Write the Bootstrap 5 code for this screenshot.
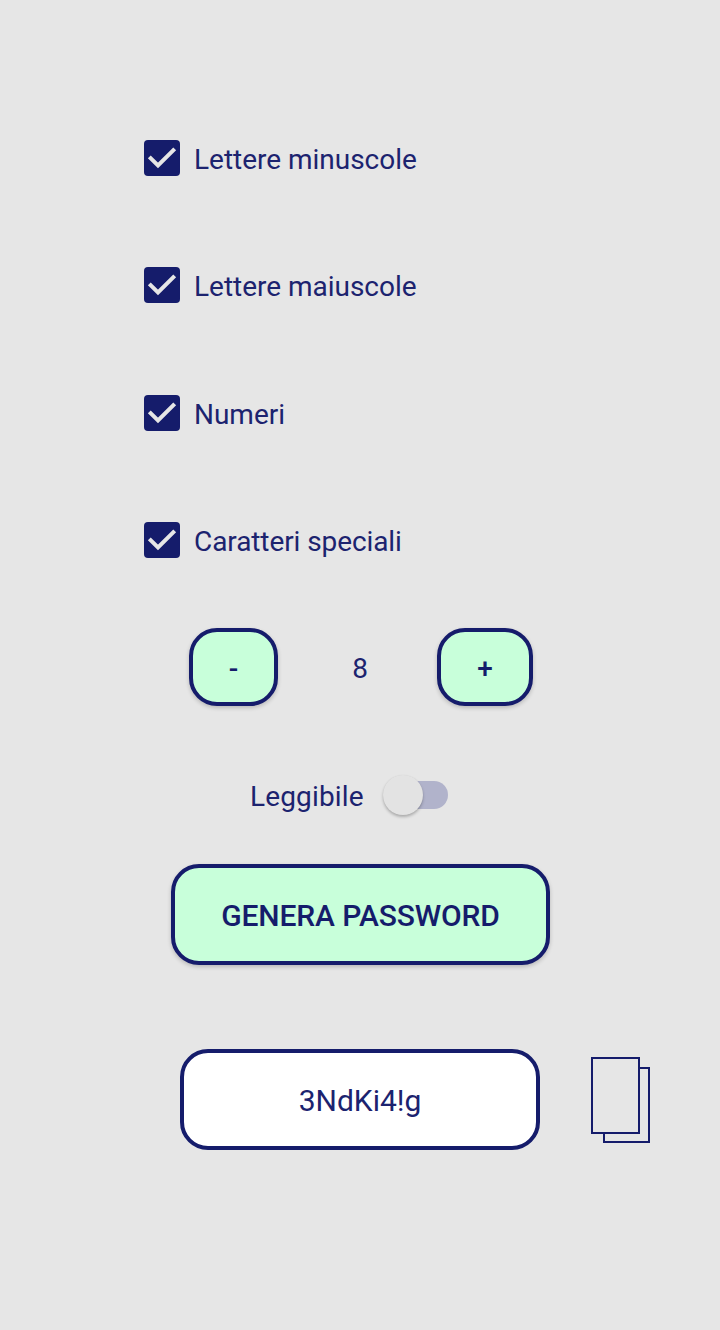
<!DOCTYPE html>
<html lang="it">
<head>
<meta charset="utf-8">
<meta name="viewport" content="width=device-width, initial-scale=1">
<title>Genera password</title>
<link href="https://cdn.jsdelivr.net/npm/bootstrap@5.3.0/dist/css/bootstrap.min.css" rel="stylesheet">
<style>
  :root { --ink: #151c6b; --mint: #c8ffda; --page: #e6e6e6; }
  body { background: var(--page); color: #1c236f; font-family: Roboto, sans-serif; font-size: 28px; line-height: 36px; }
  .screen { width: 720px; height: 1330px; padding-top: 140px; overflow: hidden; }
  .options { margin-left: 144px; height: 418px; }
  .option { height: 36px; gap: 14px; }
  .option .form-check-input[type=checkbox] { width: 36px; height: 36px; border: 0; border-radius: 4px; }
  .option .form-check-input:checked { background: var(--ink) url("data:image/svg+xml,%3Csvg xmlns='http://www.w3.org/2000/svg' viewBox='0 0 36 36'%3E%3Cpath d='M5.3 16.8 14 25.5 30.7 8.8' fill='none' stroke='%23e6e6e6' stroke-width='4'/%3E%3C/svg%3E") center/36px 36px; }
  .option label { padding-top: 4px; letter-spacing: -.02px; }
  .option:last-child label { letter-spacing: -.09px; }
  .action, .action:hover { --bs-btn-padding-x: 0; --bs-btn-padding-y: 0; background: var(--mint); color: var(--ink); border: 4px solid var(--ink); border-radius: 28px; box-shadow: 0 2px 4px rgba(0,0,0,.2); font-size: 28px; font-weight: 500; line-height: 36px; }
  .stepper { margin: 70px 187px 0 189px; height: 78px; }
  .stepper .action { padding-top: 3px; }
  .minus { width: 89px; }
  .plus { width: 96px; }
  .stepper output { margin-left: 5px; padding-top: 4px; }
  .readable { margin: 71px 0 0 250px; height: 36px; width: 198px; }
  .readable label { letter-spacing: .15px; }
  .toggle, .toggle:focus { appearance: none; width: 62px; height: 28px; margin: 0; position: relative; border-radius: 14px; background: #b1b3cb; }
  .toggle::before { content: ""; position: absolute; left: -3px; top: -6px; width: 40px; height: 40px; border-radius: 50%; background: #e3e3e3; box-shadow: 0 2px 3px rgba(0,0,0,.25), 0 0 1px rgba(0,0,0,.08); }
  .generate { width: 379px; height: 101px; margin: 51px 0 0 171px; padding-top: 2px; }
  .generate, .generate:hover { font-size: 30px; letter-spacing: -.13px; }
  .result { margin: 84px 70px 0 180px; height: 101px; }
  .result input { width: 360px; height: 101px; padding: 1px 0 0; border: 4px solid var(--ink); border-radius: 28px; background: #fff; color: #1c236f; font-size: 30px; }
  .copy { width: 59px; height: 86px; margin-top: 1px; }
</style>
</head>
<body>
<main class="screen d-flex flex-column">
  <div class="options d-flex flex-column justify-content-between">
    <div class="option d-flex align-items-center"><input class="form-check-input m-0" type="checkbox" id="lower" checked><label for="lower">Lettere minuscole</label></div>
    <div class="option d-flex align-items-center"><input class="form-check-input m-0" type="checkbox" id="upper" checked><label for="upper">Lettere maiuscole</label></div>
    <div class="option d-flex align-items-center"><input class="form-check-input m-0" type="checkbox" id="digits" checked><label for="digits">Numeri</label></div>
    <div class="option d-flex align-items-center"><input class="form-check-input m-0" type="checkbox" id="special" checked><label for="special">Caratteri speciali</label></div>
  </div>
  <div class="stepper d-flex justify-content-between align-items-stretch">
    <button class="btn action minus" type="button">-</button>
    <output class="align-self-center">8</output>
    <button class="btn action plus" type="button">+</button>
  </div>
  <div class="readable d-flex align-items-center">
    <label for="readable" class="pt-1">Leggibile</label>
    <input class="toggle ms-auto me-0" type="checkbox" role="switch" id="readable">
  </div>
  <button class="btn action generate" type="button">GENERA PASSWORD</button>
  <div class="result d-flex justify-content-between align-items-center">
    <input class="text-center" type="text" value="3NdKi4!g" aria-label="Password" readonly>
    <button class="copy btn p-0 border-0 d-flex" type="button" aria-label="Copia">
      <svg width="59" height="86" viewBox="0 0 59 86" fill="none" stroke="#151c6b" stroke-width="2">
        <path d="M49 11h9v74H13v-9"/>
        <rect x="1" y="1" width="47" height="75"/>
      </svg>
    </button>
  </div>
</main>
<script src="https://cdn.jsdelivr.net/npm/bootstrap@5.3.0/dist/js/bootstrap.bundle.min.js"></script>
</body>
</html>
